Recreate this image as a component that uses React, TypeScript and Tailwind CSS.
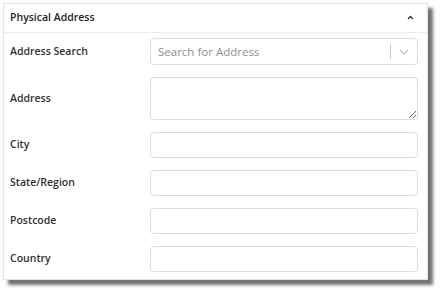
import React from "react";

const font = { fontFamily: '"Open Sans", "Noto Sans", sans-serif' };

function Label({ children }: { children: React.ReactNode }) {
  return (
    <div className="w-[140px] shrink-0 text-[10.5px] font-semibold text-[#2c3338]">{children}</div>
  );
}

function Row({ label, children }: { label: string; children: React.ReactNode }) {
  return (
    <div className="flex items-center">
      <Label>{label}</Label>
      <div className="flex-1">{children}</div>
    </div>
  );
}

function TextInput() {
  return <input className="block h-[26px] w-full rounded-[4px] border border-[#dcdcde] bg-white px-2 outline-none" />;
}

export default function App() {
  return (
    <div className="h-[290px] w-[441px] bg-white pl-[3px] pt-[3px]" style={font}>
      <div className="w-[425px] border border-[#e4e4e4] bg-white shadow-[5px_5px_3px_rgba(0,0,0,0.55)]">
        <div className="flex h-[29px] items-center justify-between border-b border-[#ececec] pl-[6px] pr-[13px]">
          <span className="text-[10.5px] font-semibold text-[#1d2327]">Physical Address</span>
          <svg width="7" height="5" viewBox="0 0 7 5" className="mt-[-2px]">
            <path d="M1 4 L3.5 1.5 L6 4" fill="none" stroke="#2c3338" strokeWidth="1.4" />
          </svg>
        </div>
        <div className="flex flex-col gap-[12px] pb-[7px] pl-[6px] pr-[9px] pt-[5px]">
          <Row label="Address Search">
            <div className="flex h-[27px] items-center rounded-[4px] border border-[#dcdcde] bg-white">
              <span className="flex-1 pl-[7px] text-[11.5px] text-[#8a8f94]">Search for Address</span>
              <div className="h-[15px] w-px bg-[#cccccc]" />
              <div className="flex w-[26px] items-center justify-center">
                <svg width="10" height="6" viewBox="0 0 10 6">
                  <path d="M1 1 L5 5 L9 1" fill="none" stroke="#c4c4c4" strokeWidth="1.3" />
                </svg>
              </div>
            </div>
          </Row>
          <Row label="Address">
            <textarea className="block h-[43px] w-full rounded-[4px] border border-[#dcdcde] bg-white px-2 outline-none" />
          </Row>
          <Row label="City">
            <TextInput />
          </Row>
          <Row label="State/Region">
            <TextInput />
          </Row>
          <Row label="Postcode">
            <TextInput />
          </Row>
          <Row label="Country">
            <TextInput />
          </Row>
        </div>
      </div>
    </div>
  );
}
